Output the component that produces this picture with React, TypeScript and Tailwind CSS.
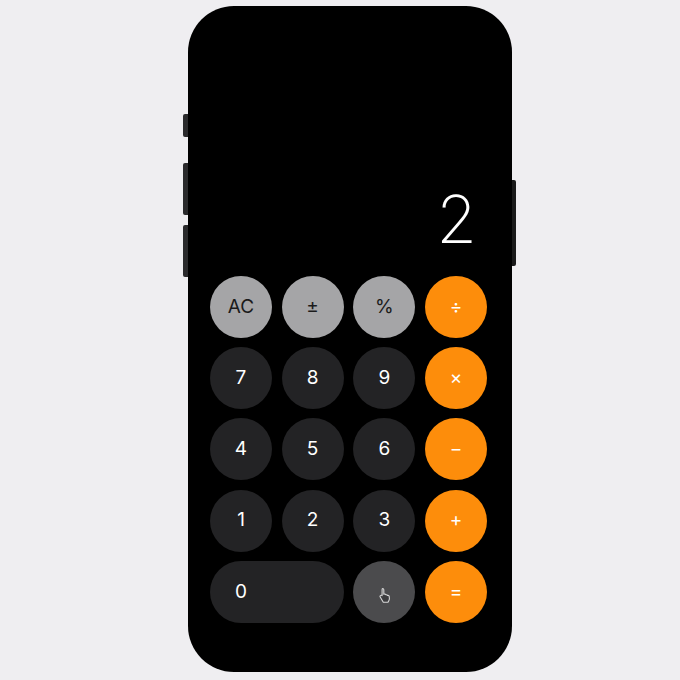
const keys: Array<{ label: string; kind: 'fn' | 'num' | 'op'; wide?: boolean }> = [
  { label: 'AC', kind: 'fn' },
  { label: '±', kind: 'fn' },
  { label: '%', kind: 'fn' },
  { label: '÷', kind: 'op' },
  { label: '7', kind: 'num' },
  { label: '8', kind: 'num' },
  { label: '9', kind: 'num' },
  { label: '×', kind: 'op' },
  { label: '4', kind: 'num' },
  { label: '5', kind: 'num' },
  { label: '6', kind: 'num' },
  { label: '−', kind: 'op' },
  { label: '1', kind: 'num' },
  { label: '2', kind: 'num' },
  { label: '3', kind: 'num' },
  { label: '+', kind: 'op' },
];

const kindClass = {
  fn: 'bg-[#a5a5a7] text-[#1b1b1b]',
  num: 'bg-[#232325] text-white',
  op: 'bg-[#fd8d0b] text-white',
};

function PointerHand() {
  // hovered cursor sitting on the decimal key
  return (
    <svg width="14" height="16" viewBox="0 0 14 16" fill="none">
      <path
        d="M4.5 1.5c.8 0 1.3.6 1.3 1.3v4.4l.4-.1c.7-.2 1.4.1 1.7.7.6-.2 1.3 0 1.6.6.7-.2 1.5.2 1.7.9.4 1.5.3 3-.4 4.4l-.8 1.6H5.3L2.2 10c-.4-.6-.2-1.300.4-1.6.5-.3 1.1-.2 1.5.2V2.8c0-.7.2-1.3.4-1.3z"
        fill="#3d3d3f"
        stroke="#d8d8d8"
        strokeWidth="1.1"
        strokeLinejoin="round"
      />
    </svg>
  );
}

export default function App() {
  return (
    <div
      className="w-[680px] h-[680px] bg-[#efeef1] pl-[188px] pt-[6px]"
      style={{ fontFamily: 'Inter, "Liberation Sans", sans-serif' }}
    >
      <div className="relative w-[324px] h-[666px] rounded-[46px] bg-black flex flex-col pl-[22px] pr-[25px] pb-[49px]">
        {/* side buttons */}
        <div className="absolute left-[-5px] top-[108px] w-[5px] h-[23px] rounded-l-[2px] bg-[#2a2a2c]" />
        <div className="absolute left-[-5px] top-[157px] w-[5px] h-[52px] rounded-l-[2px] bg-[#2a2a2c]" />
        <div className="absolute left-[-5px] top-[219px] w-[5px] h-[52px] rounded-l-[2px] bg-[#2a2a2c]" />
        <div className="absolute right-[-4px] top-[174px] w-[4px] h-[86px] rounded-r-[2px] bg-[#1a1a1a]" />

        <div className="flex-1 flex items-end justify-end pr-[10px] pb-[24px]">
          <span className="text-[66px] leading-none font-extralight text-white">2</span>
        </div>

        <div className="grid grid-cols-4 gap-x-[9.6px] gap-y-[9.3px]">
          {keys.map((k) => (
            <div
              key={k.label}
              className={`w-[62px] h-[62px] rounded-full flex items-center justify-center text-[19px] ${kindClass[k.kind]}`}
            >
              {k.label}
            </div>
          ))}
          <div className="col-span-2 h-[62px] rounded-full bg-[#232325] text-white text-[19px] flex items-center pl-[25px]">
            0
          </div>
          <div className="w-[62px] h-[62px] rounded-full bg-[#4b4b4d] flex items-center justify-center">
            <div className="pl-[2px] pt-[6px]">
              <PointerHand />
            </div>
          </div>
          <div className="w-[62px] h-[62px] rounded-full bg-[#fd8d0b] text-white text-[19px] flex items-center justify-center">
            =
          </div>
        </div>
      </div>
    </div>
  );
}
